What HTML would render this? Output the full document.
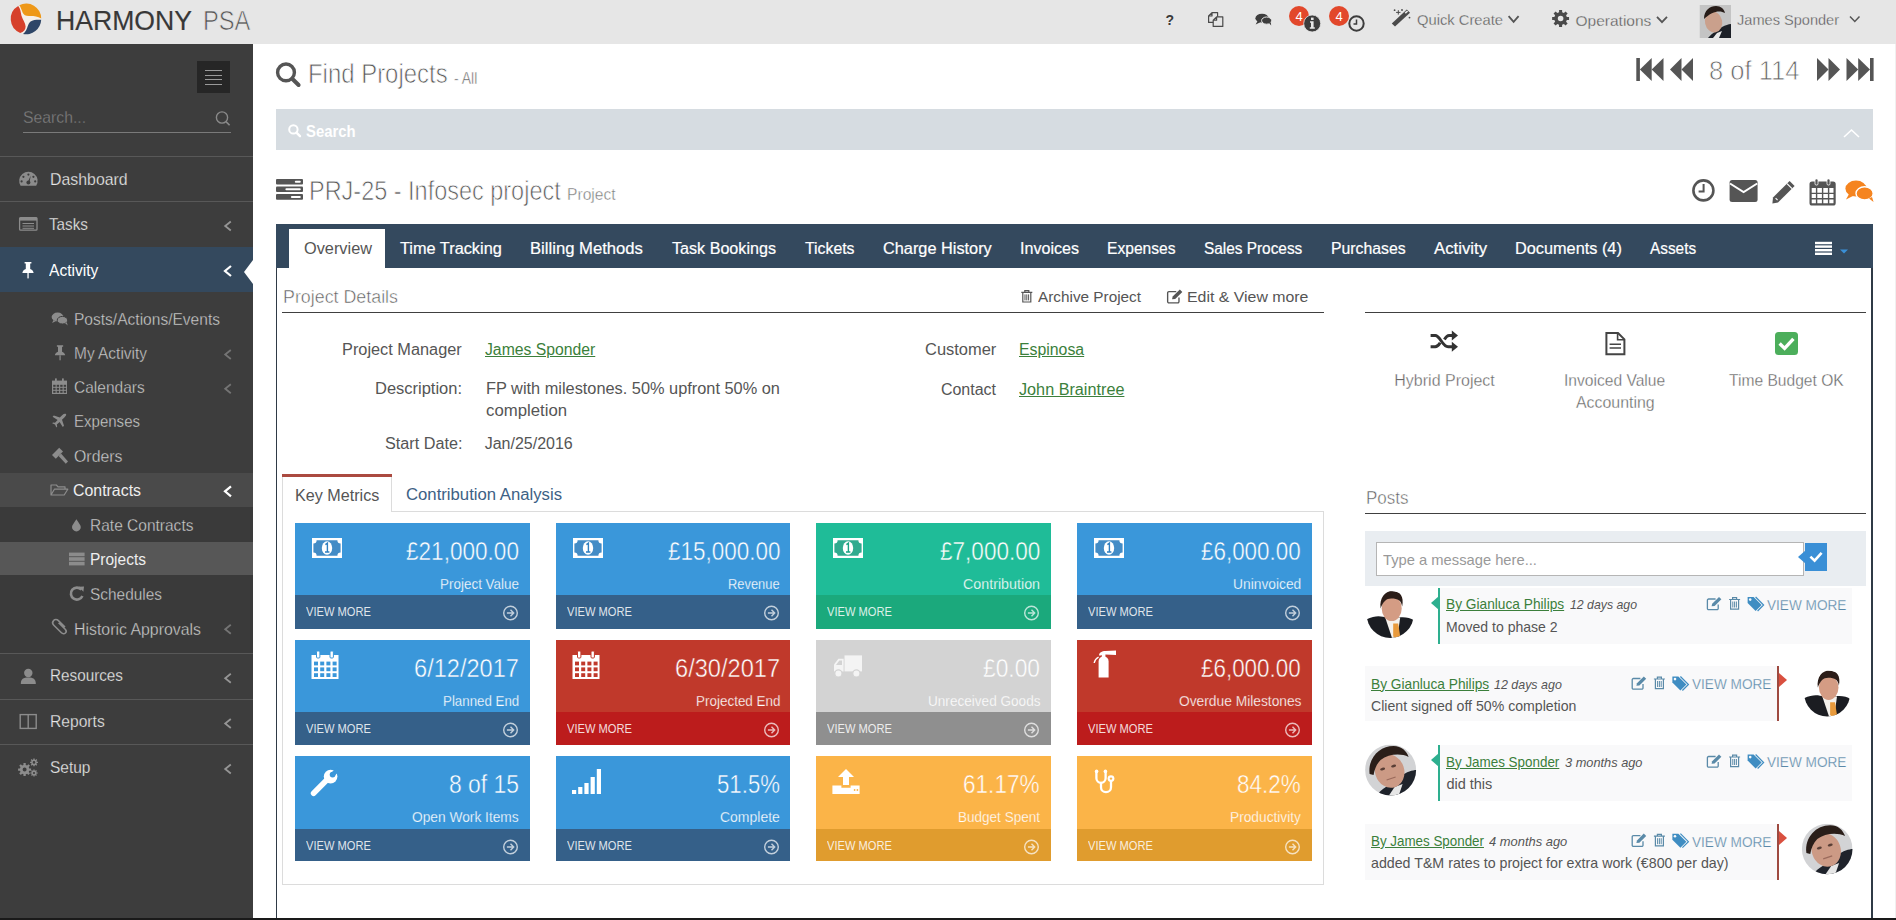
<!DOCTYPE html>
<html><head><meta charset="utf-8"><title>Harmony PSA - PRJ-25</title>
<style>
html,body{margin:0;padding:0;width:1896px;height:920px;overflow:hidden;background:#fff;font-family:'Liberation Sans', sans-serif}
.a{position:absolute}
svg{position:absolute;overflow:visible}
</style></head><body>
<!-- ===== TOPBAR ===== -->
<div class="a" style="left:0;top:0;width:1896px;height:44px;background:#e6e6e6"></div>
<div class="a" style="left:1895px;top:44px;width:1px;height:876px;background:#f0f0f0"></div>

<!-- ===== SIDEBAR ===== -->
<div class="a" style="left:0;top:44px;width:253px;height:876px;background:#3d3d3d"></div>
<!-- hamburger button -->
<div class="a" style="left:197px;top:61px;width:33px;height:32px;background:#262626"></div>
<div class="a" style="left:205px;top:70px;width:17px;height:1px;background:#9a9a9a"></div>
<div class="a" style="left:205px;top:75px;width:17px;height:1px;background:#9a9a9a"></div>
<div class="a" style="left:205px;top:79px;width:17px;height:1px;background:#9a9a9a"></div>
<div class="a" style="left:205px;top:84px;width:17px;height:1px;background:#9a9a9a"></div>
<!-- search underline -->
<div class="a" style="left:23px;top:132px;width:208px;height:1px;background:#7a7a7a"></div>
<!-- dividers -->
<div class="a" style="left:0;top:156px;width:253px;height:1px;background:#585858"></div>
<div class="a" style="left:0;top:201px;width:253px;height:1px;background:#585858"></div>
<div class="a" style="left:0;top:653px;width:253px;height:1px;background:#585858"></div>
<div class="a" style="left:0;top:699px;width:253px;height:1px;background:#585858"></div>
<div class="a" style="left:0;top:744px;width:253px;height:1px;background:#585858"></div>
<!-- active activity -->
<div class="a" style="left:0;top:247px;width:253px;height:45px;background:#34495e"></div>
<svg style="left:244px;top:260px" width="9" height="24"><polygon points="9,0 0,12 9,24" fill="#fff"/></svg>
<!-- contracts rows -->
<div class="a" style="left:0;top:473px;width:253px;height:34px;background:#4a4a4a"></div>
<div class="a" style="left:0;top:507px;width:253px;height:35px;background:#3a3a3a"></div>
<div class="a" style="left:0;top:542px;width:253px;height:33px;background:#575757"></div>
<div class="a" style="left:0;top:575px;width:253px;height:78px;background:#3a3a3a"></div>

<!-- ===== MAIN ===== -->
<!-- search bar -->
<div class="a" style="left:276px;top:109px;width:1597px;height:41px;background:#d6dce1"></div>
<!-- tab bar -->
<div class="a" style="left:276px;top:224px;width:1597px;height:44px;background:#34495e"></div>
<div class="a" style="left:289px;top:229px;width:96px;height:39px;background:#fff"></div>
<!-- panel borders -->
<div class="a" style="left:276px;top:268px;width:1px;height:652px;background:#2f3a46"></div>
<div class="a" style="left:1871px;top:268px;width:2px;height:652px;background:#2f3a46"></div>
<!-- project details divider -->
<div class="a" style="left:282px;top:312px;width:1042px;height:1px;background:#404040"></div>
<div class="a" style="left:1365px;top:312px;width:501px;height:1px;background:#404040"></div>
<!-- key metrics tab -->
<div class="a" style="left:282px;top:474px;width:110px;height:3px;background:#ab4a40"></div>
<div class="a" style="left:282px;top:477px;width:1px;height:34px;background:#dcdcdc"></div>
<div class="a" style="left:391px;top:477px;width:1px;height:34px;background:#dcdcdc"></div>
<!-- metrics panel -->
<div class="a" style="left:282px;top:511px;width:1040px;height:372px;border:1px solid #dcdcdc;border-top-color:#dcdcdc"></div>
<div class="a" style="left:283px;top:511px;width:108px;height:1px;background:#fff"></div>

<!-- posts -->
<div class="a" style="left:1365px;top:513px;width:501px;height:1px;background:#404040"></div>
<div class="a" style="left:1365px;top:531px;width:501px;height:55px;background:#e9edf1"></div>
<div class="a" style="left:1376px;top:542px;width:426px;height:32px;background:#fff;border:1px solid #b5b5b5"></div>
<div class="a" style="left:1805px;top:543px;width:22px;height:28px;background:#3a8fd6"></div>
<svg style="left:1798px;top:550px" width="8" height="14"><polygon points="8,0 0,7 8,14" fill="#3a8fd6"/></svg>

<!-- post boxes -->
<div class="a" style="left:1440px;top:588px;width:412px;height:56px;background:#f9f9fa"></div>
<div class="a" style="left:1438px;top:588px;width:2px;height:56px;background:#2eaf8f"></div>
<svg style="left:1431px;top:596px" width="8" height="14"><polygon points="8,0 0,7 8,14" fill="#2eaf8f"/></svg>

<div class="a" style="left:1365px;top:666px;width:412px;height:55px;background:#f9f9fa"></div>
<div class="a" style="left:1777px;top:666px;width:2px;height:55px;background:#9e4a40"></div>
<svg style="left:1779px;top:673px" width="8" height="14"><polygon points="0,0 8,7 0,14" fill="#d9503f"/></svg>

<div class="a" style="left:1440px;top:745px;width:412px;height:56px;background:#f9f9fa"></div>
<div class="a" style="left:1438px;top:745px;width:2px;height:56px;background:#2eaf8f"></div>
<svg style="left:1431px;top:753px" width="8" height="14"><polygon points="8,0 0,7 8,14" fill="#2eaf8f"/></svg>

<div class="a" style="left:1365px;top:824px;width:412px;height:56px;background:#f9f9fa"></div>
<div class="a" style="left:1777px;top:824px;width:2px;height:56px;background:#9e4a40"></div>
<svg style="left:1779px;top:831px" width="8" height="14"><polygon points="0,0 8,7 0,14" fill="#d9503f"/></svg>

<!-- tiles -->
<div class="a" style="left:295px;top:523px;width:235px;height:72px;background:#3a97da"></div>
<div class="a" style="left:295px;top:595px;width:235px;height:34px;background:#356089"></div>
<div class="a" style="left:556px;top:523px;width:234px;height:72px;background:#3a97da"></div>
<div class="a" style="left:556px;top:595px;width:234px;height:34px;background:#356089"></div>
<div class="a" style="left:816px;top:523px;width:235px;height:72px;background:#1fbc98"></div>
<div class="a" style="left:816px;top:595px;width:235px;height:34px;background:#1ba97c"></div>
<div class="a" style="left:1077px;top:523px;width:235px;height:72px;background:#3a97da"></div>
<div class="a" style="left:1077px;top:595px;width:235px;height:34px;background:#356089"></div>

<div class="a" style="left:295px;top:640px;width:235px;height:72px;background:#3a97da"></div>
<div class="a" style="left:295px;top:712px;width:235px;height:33px;background:#356089"></div>
<div class="a" style="left:556px;top:640px;width:234px;height:72px;background:#c0392b"></div>
<div class="a" style="left:556px;top:712px;width:234px;height:33px;background:#bc1c1c"></div>
<div class="a" style="left:816px;top:640px;width:235px;height:72px;background:#d3d3d3"></div>
<div class="a" style="left:816px;top:712px;width:235px;height:33px;background:#8f8f8f"></div>
<div class="a" style="left:1077px;top:640px;width:235px;height:72px;background:#c0392b"></div>
<div class="a" style="left:1077px;top:712px;width:235px;height:33px;background:#bc1c1c"></div>

<div class="a" style="left:295px;top:756px;width:235px;height:73px;background:#3a97da"></div>
<div class="a" style="left:295px;top:829px;width:235px;height:32px;background:#356089"></div>
<div class="a" style="left:556px;top:756px;width:234px;height:73px;background:#3a97da"></div>
<div class="a" style="left:556px;top:829px;width:234px;height:32px;background:#356089"></div>
<div class="a" style="left:816px;top:756px;width:235px;height:73px;background:#fbb448"></div>
<div class="a" style="left:816px;top:829px;width:235px;height:32px;background:#e09c2e"></div>
<div class="a" style="left:1077px;top:756px;width:235px;height:73px;background:#fbb448"></div>
<div class="a" style="left:1077px;top:829px;width:235px;height:32px;background:#e09c2e"></div>

<!-- bottom line -->
<div class="a" style="left:0;top:918px;width:1896px;height:2px;background:#1a1a1a"></div>

<svg style="left:0;top:0" width="1896" height="920" viewBox="0 0 1896 920"><g transform="translate(11.2,4.2)"><circle cx="15" cy="15" r="15" fill="#f6efe9"/><path d="M8.1,1.0 A15,15 0 0 1 30,14.2 C26,11.8 21,11.6 17.7,11.8 C14.4,11.8 12.4,10.4 11.4,8.2 C10.4,5.8 9.6,2.8 8.1,1.0 Z" fill="#ee9818"/><path d="M7,1.8 A15,15 0 0 0 9,28.7 C12.6,27.8 14.4,25.6 14.4,22.4 C14.4,18.6 11.4,15.2 10.2,11.2 C9.4,7.8 9.2,4.2 7,1.8 Z" fill="#d6402b"/><path d="M30,15.6 A15,15 0 0 1 11.8,29.7 C14.6,27.6 15.8,24.6 16.6,21.8 C17.6,18.4 19.8,16.2 23.2,15.8 C25.8,15.5 28,15.6 30,15.6 Z" fill="#2e4668"/></g>
<text x="1165.5" y="25" font-family="Liberation Sans" font-weight="bold" font-size="14" fill="#3a3a3a">?</text>
<g fill="none" stroke="#4a4a4a" stroke-width="1.2" stroke-linejoin="round"><path d="M1212,12.6 h5.6 v5 M1214,22.4 h-5.4 v-6.4 l3.4,-3.4 v3.4 h-3.4"/><path d="M1216.6,16.8 h6.2 v9.6 h-9.6 v-6.2 z M1213.2,20.2 h3.4 v-3.4" fill="#e6e6e6"/></g>
<g fill="#3d3d3d"><ellipse cx="1262" cy="18.2" rx="6.6" ry="4.4"/><path d="M1257.5,21 l-1.8,3.6 l4.6,-2.4z"/><ellipse cx="1266.6" cy="20.6" rx="5" ry="3.6" stroke="#e6e6e6" stroke-width="1"/><path d="M1269,23 l2.2,2.6 l-0.4,-3.4z"/></g>
<circle cx="1299" cy="16" r="10" fill="#e2482b"/>
<text x="1299" y="21" text-anchor="middle" font-family="Liberation Sans" font-size="13" fill="#fff">4</text>
<circle cx="1339" cy="16" r="10" fill="#e2482b"/>
<text x="1339" y="21" text-anchor="middle" font-family="Liberation Sans" font-size="13" fill="#fff">4</text>
<circle cx="1312.2" cy="23.5" r="8.5" fill="#3d3d3d" stroke="#e6e6e6" stroke-width="0.8"/>
<rect x="1311" y="17.6" width="2.6" height="2.4" fill="#e6e6e6"/><path d="M1310,21.2 h3.6 v6 h1.2 v1.6 h-5 v-1.6 h1.2 v-4.4 h-1z" fill="#e6e6e6"/>
<circle cx="1356.5" cy="23.5" r="7.2" fill="#e6e6e6" stroke="#3d3d3d" stroke-width="2"/>
<polyline points="1356.5,19.5 1356.5,24 1353.5,24" fill="none" stroke="#3d3d3d" stroke-width="1.5"/>
<g><path d="M1391.8,23.5 L1406.8,9.6 L1410,12.8 L1395,26.6Z" fill="#4a4a4a"/><path d="M1404.6,12.6 L1407,10.4 L1408.2,11.6 L1405.8,13.8Z" fill="#e6e6e6"/><path d="M1398.3,10.2 v4.4 M1396.1,12.4 h4.4" stroke="#4a4a4a" stroke-width="1"/><circle cx="1394.6" cy="10.2" r="0.9" fill="#4a4a4a"/><circle cx="1402" cy="10" r="0.9" fill="#4a4a4a"/><circle cx="1409.5" cy="17.6" r="0.9" fill="#4a4a4a"/></g>
<polyline points="1508.6,16.2 1513.6,21.8 1518.6,16.2" fill="none" stroke="#555" stroke-width="1.8"/>
<path d="M1569.07,16.99 L1569.07,20.01 L1566.82,20.02 L1566.07,21.82 L1567.66,23.42 L1565.52,25.56 L1563.92,23.97 L1562.12,24.72 L1562.11,26.97 L1559.09,26.97 L1559.08,24.72 L1557.28,23.97 L1555.68,25.56 L1553.54,23.42 L1555.13,21.82 L1554.38,20.02 L1552.13,20.01 L1552.13,16.99 L1554.38,16.98 L1555.13,15.18 L1553.54,13.58 L1555.68,11.44 L1557.28,13.03 L1559.08,12.28 L1559.09,10.03 L1562.11,10.03 L1562.12,12.28 L1563.92,13.03 L1565.52,11.44 L1567.66,13.58 L1566.07,15.18 L1566.82,16.98Z M1563.40,18.50 A2.8,2.8 0 1 0 1557.80,18.50 A2.8,2.8 0 1 0 1563.40,18.50Z" fill="#4a4a4a" fill-rule="evenodd"/>
<polyline points="1657.0,16.8 1662.0,22.2 1667.0,16.8" fill="none" stroke="#555" stroke-width="1.8"/>
<clipPath id="avtop"><rect x="1699.5" y="5" width="31.5" height="33"/></clipPath>
<g clip-path="url(#avtop)"><rect x="1699.5" y="5" width="31.5" height="33" fill="#c4c4c4"/><path d="M1708,38 C1712,33 1718,30 1722,27 C1726,25 1729,24 1732,24 V38Z" fill="#1c2027"/><path d="M1713,38 L1717,33 L1722,31 L1719,38Z" fill="#e8e8e8"/><ellipse cx="1713.6" cy="22" rx="8.6" ry="10.6" fill="#caa08c" transform="rotate(-12 1713.6 22)"/><path d="M1704,19 C1704,10 1710,6 1716,6 C1721,6 1724,9 1725,13 C1720,10 1712,11 1704,19Z" fill="#271c18"/></g>
<polyline points="1850.0,16.5 1854.8,21.5 1859.5,16.5" fill="none" stroke="#555" stroke-width="1.5"/>
<circle cx="222" cy="117.5" r="5.6" fill="none" stroke="#8a8a8a" stroke-width="1.4"/><line x1="226" y1="121.6" x2="229.6" y2="125.2" stroke="#8a8a8a" stroke-width="1.6"/>
<path d="M20.6,185.8 A9.2,9.2 0 1 1 36.2,185.8 Z" fill="#8c8c8c"/>
<g fill="#3d3d3d"><circle cx="28.4" cy="174.6" r="1.1"/><circle cx="23.4" cy="176.8" r="1.1"/><circle cx="33.4" cy="176.8" r="1.1"/><circle cx="21.6" cy="181.4" r="1.1"/><circle cx="35.2" cy="181.4" r="1.1"/><circle cx="28.4" cy="182.6" r="2"/><path d="M27.6,182.6 L30.8,175.4 L29.4,183Z"/></g>
<rect x="19.6" y="217.6" width="17.4" height="12.6" rx="1" fill="none" stroke="#8c8c8c" stroke-width="1.3"/><rect x="19.6" y="217.6" width="17.4" height="3" fill="#8c8c8c"/><path d="M22.5,223.5 h11.5 M22.5,226 h11.5 M22.5,228.3 h11.5" stroke="#8c8c8c" stroke-width="1"/>
<g transform="translate(22,262) scale(1.0)" fill="#ffffff"><path d="M2.6,0 h6.8 v1.6 h-1.2 v5.4 C10.6,8 11.6,9.6 11.6,11 h-11.2 C0.4,9.6 1.4,8 3.8,7 v-5.4 h-1.2z"/><rect x="5.4" y="11" width="1.3" height="5.4"/></g>
<g fill="#8c8c8c"><ellipse cx="57.6" cy="317" rx="6" ry="4.4"/><path d="M53.5,320 l-1.4,3 l4,-2z"/><ellipse cx="62.4" cy="320.2" rx="5.2" ry="3.8" stroke="#3d3d3d" stroke-width="1"/><path d="M65,323 l2.6,2.4 l-0.8,-3.2z"/></g>
<g transform="translate(54.5,345.2) scale(0.92)" fill="#8c8c8c"><path d="M2.6,0 h6.8 v1.6 h-1.2 v5.4 C10.6,8 11.6,9.6 11.6,11 h-11.2 C0.4,9.6 1.4,8 3.8,7 v-5.4 h-1.2z"/><rect x="5.4" y="11" width="1.3" height="5.4"/></g>
<g fill="#8c8c8c"><rect x="52" y="380.6" width="15" height="13.4"/></g><g fill="#3d3d3d"><rect x="53.2" y="384.8" width="2.4" height="2"/><rect x="53.2" y="387.8" width="2.4" height="2"/><rect x="53.2" y="390.8" width="2.4" height="2"/><rect x="56.7" y="384.8" width="2.4" height="2"/><rect x="56.7" y="387.8" width="2.4" height="2"/><rect x="56.7" y="390.8" width="2.4" height="2"/><rect x="60.2" y="384.8" width="2.4" height="2"/><rect x="60.2" y="387.8" width="2.4" height="2"/><rect x="60.2" y="390.8" width="2.4" height="2"/><rect x="63.7" y="384.8" width="2.4" height="2"/><rect x="63.7" y="387.8" width="2.4" height="2"/><rect x="63.7" y="390.8" width="2.4" height="2"/></g><rect x="55" y="378.4" width="1.8" height="3.6" fill="#8c8c8c"/><rect x="62" y="378.4" width="1.8" height="3.6" fill="#8c8c8c"/>
<path d="M66,414 C65,413.2 63.6,413.8 62.4,415 L59.8,417.6 L53.8,415.6 L52.6,416.8 L57.6,420 L55,422.8 L53,422.4 L52.2,423.2 L55,424.6 L56.4,427.4 L57.2,426.6 L56.8,424.6 L59.6,422 L62.8,427 L64,425.8 L62,419.8 L64.6,417.2 C65.8,416 66.6,414.8 66,414Z" fill="#8c8c8c"/>
<g fill="#8c8c8c"><path d="M52,455 L59.2,447.8 L63,451.6 L55.8,458.8Z"/><path d="M58.6,456 L61,453.6 L68,461.4 L65.8,463.8Z"/></g>
<path d="M51,495 V485 h5.4 l1.6,1.8 h7 v2.6 M51,495 l3.4,-5.8 h13.4 l-3.6,5.8z" fill="none" stroke="#8c8c8c" stroke-width="1.2" stroke-linejoin="round"/>
<path d="M76.4,519.2 C74,523 72,525.2 72,527 A4.4,4.4 0 0 0 80.8,527 C80.8,525.2 78.8,523 76.4,519.2Z" fill="#8c8c8c"/>
<g fill="#8c8c8c"><rect x="69" y="552.6" width="15.6" height="3.6"/><rect x="69" y="557.2" width="15.6" height="3.6"/><rect x="69" y="561.8" width="15.6" height="3.6"/></g>
<path d="M81.4,589.6 A6,6 0 1 0 82.4,596" fill="none" stroke="#8c8c8c" stroke-width="2.6"/><path d="M78.6,586.8 L84,586.4 L83.4,591.8Z" fill="#8c8c8c"/>
<path d="M55,626 L61.6,619.6 C63,618.2 65.2,618.2 66.4,619.6 C67.6,620.8 67.6,622.8 66.2,624.2 L58.6,631.8 C57.4,633 55.6,633 54.6,632 C53.6,631 53.6,629.4 54.8,628.2 L61.4,621.6" fill="none" stroke="#8c8c8c" stroke-width="1.6" transform="translate(120,1) scale(-1,1)"/>
<g fill="#8c8c8c"><circle cx="28.3" cy="673" r="4.2"/><path d="M20.8,684 C20.8,679 23.4,677.6 28.3,677.6 C33.2,677.6 35.8,679 35.8,684Z"/></g>
<rect x="20.2" y="714.6" width="16" height="13.8" fill="none" stroke="#8c8c8c" stroke-width="1.4"/><line x1="28.2" y1="714.6" x2="28.2" y2="728.4" stroke="#8c8c8c" stroke-width="1.4"/>
<path d="M31.10,768.44 L31.10,770.76 L29.26,770.74 L28.70,772.09 L30.01,773.37 L28.37,775.01 L27.09,773.70 L25.74,774.26 L25.76,776.10 L23.44,776.10 L23.46,774.26 L22.11,773.70 L20.83,775.01 L19.19,773.37 L20.50,772.09 L19.94,770.74 L18.10,770.76 L18.10,768.44 L19.94,768.46 L20.50,767.11 L19.19,765.83 L20.83,764.19 L22.11,765.50 L23.46,764.94 L23.44,763.10 L25.76,763.10 L25.74,764.94 L27.09,765.50 L28.37,764.19 L30.01,765.83 L28.70,767.11 L29.26,768.46Z M26.60,769.60 A2,2 0 1 0 22.60,769.60 A2,2 0 1 0 26.60,769.60Z" fill="#8c8c8c" fill-rule="evenodd"/>
<path d="M37.94,761.70 L37.94,763.10 L36.82,763.09 L36.48,763.91 L37.28,764.69 L36.29,765.68 L35.51,764.88 L34.69,765.22 L34.70,766.34 L33.30,766.34 L33.31,765.22 L32.49,764.88 L31.71,765.68 L30.72,764.69 L31.52,763.91 L31.18,763.09 L30.06,763.10 L30.06,761.70 L31.18,761.71 L31.52,760.89 L30.72,760.11 L31.71,759.12 L32.49,759.92 L33.31,759.58 L33.30,758.46 L34.70,758.46 L34.69,759.58 L35.51,759.92 L36.29,759.12 L37.28,760.11 L36.48,760.89 L36.82,761.71Z M35.30,762.40 A1.3,1.3 0 1 0 32.70,762.40 A1.3,1.3 0 1 0 35.30,762.40Z" fill="#8c8c8c" fill-rule="evenodd"/>
<path d="M37.54,772.37 L37.54,773.63 L36.53,773.62 L36.22,774.35 L36.95,775.06 L36.06,775.95 L35.35,775.22 L34.62,775.53 L34.63,776.54 L33.37,776.54 L33.38,775.53 L32.65,775.22 L31.94,775.95 L31.05,775.06 L31.78,774.35 L31.47,773.62 L30.46,773.63 L30.46,772.37 L31.47,772.38 L31.78,771.65 L31.05,770.94 L31.94,770.05 L32.65,770.78 L33.38,770.47 L33.37,769.46 L34.63,769.46 L34.62,770.47 L35.35,770.78 L36.06,770.05 L36.95,770.94 L36.22,771.65 L36.53,772.38Z M35.10,773.00 A1.1,1.1 0 1 0 32.90,773.00 A1.1,1.1 0 1 0 35.10,773.00Z" fill="#8c8c8c" fill-rule="evenodd"/>
<polyline points="230.8,221.5 225.2,226.0 230.8,230.5" fill="none" stroke="#959595" stroke-width="1.8"/>
<polyline points="230.8,673.8 225.2,678.3 230.8,682.8" fill="none" stroke="#959595" stroke-width="1.8"/>
<polyline points="230.8,719.0 225.2,723.5 230.8,728.0" fill="none" stroke="#959595" stroke-width="1.8"/>
<polyline points="230.8,764.5 225.2,769.0 230.8,773.5" fill="none" stroke="#959595" stroke-width="1.8"/>
<polyline points="230.8,350.0 225.2,354.5 230.8,359.0" fill="none" stroke="#747474" stroke-width="1.8"/>
<polyline points="230.8,384.2 225.2,388.7 230.8,393.2" fill="none" stroke="#747474" stroke-width="1.8"/>
<polyline points="230.8,624.8 225.2,629.3 230.8,633.8" fill="none" stroke="#747474" stroke-width="1.8"/>
<polyline points="231.0,266.0 225.0,271.0 231.0,276.0" fill="none" stroke="#ffffff" stroke-width="2.2"/>
<polyline points="231.0,486.3 225.0,491.3 231.0,496.3" fill="none" stroke="#ffffff" stroke-width="2.2"/>
<circle cx="286" cy="72.4" r="8.4" fill="none" stroke="#555" stroke-width="3.4"/><line x1="292.2" y1="78.8" x2="298.6" y2="85" stroke="#555" stroke-width="4" stroke-linecap="round"/>
<g fill="#555"><rect x="1636.3" y="58" width="3.6" height="23"/><path d="M1639.9,69.5 L1651.7,58 V81Z"/><path d="M1651.7,69.5 L1663.5,58 V81Z"/><path d="M1670,69.5 L1681.5,58 V81Z"/><path d="M1681.5,69.5 L1693,58 V81Z"/><path d="M1840,69.5 L1828.5,58 V81Z"/><path d="M1828.5,69.5 L1817,58 V81Z"/><path d="M1870,69.5 L1858.2,58 V81Z"/><path d="M1858.2,69.5 L1846.5,58 V81Z"/><rect x="1870" y="58" width="3.6" height="23"/></g>
<circle cx="293.4" cy="129.4" r="4.2" fill="none" stroke="#fff" stroke-width="2"/><line x1="296.4" y1="132.6" x2="300" y2="136.2" stroke="#fff" stroke-width="2.4" stroke-linecap="round"/>
<polyline points="1844,137 1851.5,130 1859,137" fill="none" stroke="#fff" stroke-width="1.6"/>
<g fill="#555"><rect x="276" y="179" width="27" height="5.4" rx="1"/><rect x="276" y="186.5" width="27" height="5.4" rx="1"/><rect x="276" y="194" width="27" height="5.8" rx="1"/></g><g fill="#fff"><rect x="294.8" y="180.8" width="6" height="2" rx="1"/><rect x="285.4" y="188.3" width="15.4" height="2" rx="1"/><rect x="290.9" y="196" width="9.9" height="2" rx="1"/></g>
<circle cx="1703.4" cy="190.4" r="10" fill="none" stroke="#555" stroke-width="2.6"/><polyline points="1703.6,184 1703.6,191.4 1698.6,191.4" fill="none" stroke="#555" stroke-width="2"/>
<rect x="1729.6" y="180" width="28" height="22" rx="2.5" fill="#555"/><polyline points="1730,183.5 1743.6,192 1757.2,183.5" fill="none" stroke="#fff" stroke-width="2"/>
<path d="M1773,197.4 L1789.6,181 L1794.6,186 L1778,202.4 L1772.4,203.4Z" fill="#555"/><path d="M1787,183.6 L1792,188.6" stroke="#fff" stroke-width="1.2"/><path d="M1775.6,198.2 L1777.6,200.2" stroke="#fff" stroke-width="1.2"/>
<rect x="1810.6" y="182.6" width="24" height="21.8" rx="1.5" fill="none" stroke="#555" stroke-width="2.2"/><rect x="1810.6" y="182.6" width="24" height="5.4" fill="#555"/><path d="M1816.6,188 V204 M1822.6,188 V204 M1828.6,188 V204 M1811,193.4 H1834 M1811,198.8 H1834" stroke="#555" stroke-width="1.4"/><rect x="1815" y="179" width="3" height="6" rx="1.2" fill="#555" stroke="#fff" stroke-width="0.8"/><rect x="1827" y="179" width="3" height="6" rx="1.2" fill="#555" stroke="#fff" stroke-width="0.8"/>
<g fill="#f5841f"><ellipse cx="1856" cy="188.6" rx="10.6" ry="8"/><path d="M1849,194 l-3,5.4 l7.4,-3.6z"/><ellipse cx="1864.6" cy="193.4" rx="8.6" ry="6.6" stroke="#fff" stroke-width="1.4"/><path d="M1869,198.6 l4.6,3.4 l-1.6,-5z"/></g>
<g fill="#fff"><rect x="1815" y="241.8" width="17" height="2.4"/><rect x="1815" y="245.4" width="17" height="2.4"/><rect x="1815" y="249" width="17" height="2.4"/><rect x="1815" y="252.6" width="17" height="2.4"/></g>
<path d="M1840,249.4 h8 l-4,4z" fill="#3a8fd6"/>
<g transform="translate(1020.8,289.4) scale(1.0)" fill="none" stroke="#555" stroke-width="1.2"><path d="M0.5,3 h11 M2,3 v9.6 h8 v-9.6 M4,3 v-1.8 h4 v1.8"/><path d="M4.2,5 v6 M6,5 v6 M7.8,5 v6" stroke-width="1"/></g>
<g transform="translate(1166.8,289) scale(1.05)"><path d="M9,2.5 H2 A1.2,1.2 0 0 0 0.8,3.7 V12 A1.2,1.2 0 0 0 2,13.2 H10.4 A1.2,1.2 0 0 0 11.6,12 V8" fill="none" stroke="#555" stroke-width="1.3"/><path d="M5,9.8 L5.6,7.2 L12.4,0.4 L14.8,2.8 L8,9.6Z" fill="#555"/></g>
<g fill="none" stroke="#333" stroke-width="3"><path d="M1430.6,335.4 h4.6 c5,0 7,11.4 13,11.4 h4"/><path d="M1430.6,346.8 h4.6 c2.4,0 3.8,-2 5,-4"/><path d="M1444.4,339.4 c1.2,-2 2.8,-4 4.6,-4 h3.6"/></g><g fill="#333"><path d="M1451.8,330.4 L1458,335.4 L1451.8,340.4Z"/><path d="M1451.8,341.8 L1458,346.8 L1451.8,351.8Z"/></g>
<path d="M1606.4,333 h11.6 l6.4,6.4 v14.8 h-18z" fill="none" stroke="#444" stroke-width="2"/><path d="M1617.6,333 v6.8 h6.8" fill="none" stroke="#444" stroke-width="1.6"/><path d="M1609.6,344.2 h11.4 M1609.6,348 h11.4" stroke="#444" stroke-width="1.6"/>
<rect x="1775" y="332" width="23" height="23" rx="3.5" fill="#4cae5b"/><polyline points="1779.6,343.6 1784.6,348.4 1793.4,338.8" fill="none" stroke="#fff" stroke-width="3.4"/>
<polyline points="1810.4,556.6 1814.6,560.6 1821.6,552.8" fill="none" stroke="#fff" stroke-width="2.6"/>
<rect x="312" y="538" width="30" height="20" fill="#fff"/><path d="M316.6,540.2 h20.8 a3.2,3.2 0 0 0 3.2,3.2 v9.2 a3.2,3.2 0 0 0 -3.2,3.2 h-20.8 a3.2,3.2 0 0 0 -3.2,-3.2 v-9.2 a3.2,3.2 0 0 0 3.2,-3.2z" fill="#2f7fc0" opacity="0.9"/><ellipse cx="327" cy="548" rx="5.2" ry="6.8" fill="#fff"/><path d="M325.4,544.6 l2,-1.4 v8.8 M325,552 h4.4" fill="none" stroke="#2f7fc0" stroke-width="1.4"/>
<rect x="573" y="538" width="30" height="20" fill="#fff"/><path d="M577.6,540.2 h20.8 a3.2,3.2 0 0 0 3.2,3.2 v9.2 a3.2,3.2 0 0 0 -3.2,3.2 h-20.8 a3.2,3.2 0 0 0 -3.2,-3.2 v-9.2 a3.2,3.2 0 0 0 3.2,-3.2z" fill="#2f7fc0" opacity="0.9"/><ellipse cx="588" cy="548" rx="5.2" ry="6.8" fill="#fff"/><path d="M586.4,544.6 l2,-1.4 v8.8 M586,552 h4.4" fill="none" stroke="#2f7fc0" stroke-width="1.4"/>
<rect x="833" y="538" width="30" height="20" fill="#fff"/><path d="M837.6,540.2 h20.8 a3.2,3.2 0 0 0 3.2,3.2 v9.2 a3.2,3.2 0 0 0 -3.2,3.2 h-20.8 a3.2,3.2 0 0 0 -3.2,-3.2 v-9.2 a3.2,3.2 0 0 0 3.2,-3.2z" fill="#19a283" opacity="0.9"/><ellipse cx="848" cy="548" rx="5.2" ry="6.8" fill="#fff"/><path d="M846.4,544.6 l2,-1.4 v8.8 M846,552 h4.4" fill="none" stroke="#19a283" stroke-width="1.4"/>
<rect x="1094" y="538" width="30" height="20" fill="#fff"/><path d="M1098.6,540.2 h20.8 a3.2,3.2 0 0 0 3.2,3.2 v9.2 a3.2,3.2 0 0 0 -3.2,3.2 h-20.8 a3.2,3.2 0 0 0 -3.2,-3.2 v-9.2 a3.2,3.2 0 0 0 3.2,-3.2z" fill="#2f7fc0" opacity="0.9"/><ellipse cx="1109" cy="548" rx="5.2" ry="6.8" fill="#fff"/><path d="M1107.4,544.6 l2,-1.4 v8.8 M1107,552 h4.4" fill="none" stroke="#2f7fc0" stroke-width="1.4"/>
<rect x="311.5" y="655" width="27" height="24" fill="#fff"/><rect x="314.0" y="661.6" width="4" height="3.8" fill="#3a97da"/><rect x="314.0" y="667.4" width="4" height="3.8" fill="#3a97da"/><rect x="314.0" y="673.2" width="4" height="3.8" fill="#3a97da"/><rect x="320.2" y="661.6" width="4" height="3.8" fill="#3a97da"/><rect x="320.2" y="667.4" width="4" height="3.8" fill="#3a97da"/><rect x="320.2" y="673.2" width="4" height="3.8" fill="#3a97da"/><rect x="326.4" y="661.6" width="4" height="3.8" fill="#3a97da"/><rect x="326.4" y="667.4" width="4" height="3.8" fill="#3a97da"/><rect x="326.4" y="673.2" width="4" height="3.8" fill="#3a97da"/><rect x="332.6" y="661.6" width="4" height="3.8" fill="#3a97da"/><rect x="332.6" y="667.4" width="4" height="3.8" fill="#3a97da"/><rect x="332.6" y="673.2" width="4" height="3.8" fill="#3a97da"/><rect x="316.5" y="651" width="3.4" height="7" rx="1" fill="#fff" stroke="#3a97da" stroke-width="1"/><rect x="330" y="651" width="3.4" height="7" rx="1" fill="#fff" stroke="#3a97da" stroke-width="1"/>
<rect x="572.5" y="655" width="27" height="24" fill="#fff"/><rect x="575.0" y="661.6" width="4" height="3.8" fill="#c0392b"/><rect x="575.0" y="667.4" width="4" height="3.8" fill="#c0392b"/><rect x="575.0" y="673.2" width="4" height="3.8" fill="#c0392b"/><rect x="581.2" y="661.6" width="4" height="3.8" fill="#c0392b"/><rect x="581.2" y="667.4" width="4" height="3.8" fill="#c0392b"/><rect x="581.2" y="673.2" width="4" height="3.8" fill="#c0392b"/><rect x="587.4" y="661.6" width="4" height="3.8" fill="#c0392b"/><rect x="587.4" y="667.4" width="4" height="3.8" fill="#c0392b"/><rect x="587.4" y="673.2" width="4" height="3.8" fill="#c0392b"/><rect x="593.6" y="661.6" width="4" height="3.8" fill="#c0392b"/><rect x="593.6" y="667.4" width="4" height="3.8" fill="#c0392b"/><rect x="593.6" y="673.2" width="4" height="3.8" fill="#c0392b"/><rect x="577.5" y="651" width="3.4" height="7" rx="1" fill="#fff" stroke="#c0392b" stroke-width="1"/><rect x="591" y="651" width="3.4" height="7" rx="1" fill="#fff" stroke="#c0392b" stroke-width="1"/>
<g fill="#f4f4f4"><rect x="844.5" y="655.4" width="17.5" height="16"/><path d="M834,671.4 v-7 l4.4,-5.6 h5.2 v12.6z"/><circle cx="838.4" cy="673.4" r="3.6" stroke="#d3d3d3" stroke-width="1.2"/><circle cx="856.4" cy="673.4" r="3.6" stroke="#d3d3d3" stroke-width="1.2"/></g><path d="M836,665 l3.4,-4.4 h2.6 v4.4z" fill="#d3d3d3"/>
<g fill="#fff"><path d="M1098.6,677.4 v-16 a5,5 0 0 1 10,0 v16z"/><rect x="1101.8" y="653.4" width="3.6" height="4"/><path d="M1099,655.6 c0,-3 3,-4.6 6.4,-4.6 l10.6,-0.4 v4.4 l-10.6,-0.4 c-2,0 -4.4,0.6 -4.4,1z"/><path d="M1098.6,657 c-2.4,1.4 -4,3.4 -4.4,6" fill="none" stroke="#fff" stroke-width="1.4"/></g>
<line x1="313.6" y1="793.2" x2="326" y2="780.8" stroke="#fff" stroke-width="5.6" stroke-linecap="round"/><circle cx="330.6" cy="776.6" r="6.8" fill="#fff"/><circle cx="332.6" cy="774.6" r="2.9" fill="#3a97da"/><path d="M330.6,773.4 L333.8,776.6 L340,770.4 L336.8,767.2Z" fill="#3a97da"/>
<rect x="572.0" y="790.0" width="4.2" height="4" fill="#fff"/><rect x="578.2" y="787.0" width="4.2" height="7" fill="#fff"/><rect x="584.4" y="783.0" width="4.2" height="11" fill="#fff"/><rect x="590.6" y="777.0" width="4.2" height="17" fill="#fff"/><rect x="596.8" y="769.0" width="4.2" height="25" fill="#fff"/>
<g fill="#fff"><path d="M846,769 L854,777 h-5 v8 h-6 v-8 h-5z"/><path d="M832.4,785.4 h9 v2.4 h9.2 v-2.4 h9 v8.6 h-27.2z"/></g><circle cx="854.6" cy="790" r="0.9" fill="#fbb448"/><circle cx="857.4" cy="790" r="0.9" fill="#fbb448"/>
<g fill="none" stroke="#fff" stroke-width="2.3" stroke-linecap="round"><path d="M1096.4,771.6 v6.6 a4.6,4.6 0 0 0 9.2,0 v-6.6"/><path d="M1101,782.8 v4.4 a5,5 0 0 0 10,0 v-5.6"/></g><circle cx="1096.6" cy="771.4" r="1.8" fill="#fff"/><circle cx="1105.4" cy="771.4" r="1.8" fill="#fff"/><circle cx="1111" cy="778.6" r="3.4" fill="#fff"/><circle cx="1111" cy="778.6" r="1.2" fill="#fbb448"/>
<circle cx="510.5" cy="613.0" r="6.8" fill="none" stroke="rgba(255,255,255,0.7)" stroke-width="1.4"/><path d="M506.9,613.0 h6.6 M510.5,609.7 l3.2,3.3 l-3.2,3.3" fill="none" stroke="rgba(255,255,255,0.7)" stroke-width="1.4"/>
<circle cx="771.5" cy="613.0" r="6.8" fill="none" stroke="rgba(255,255,255,0.7)" stroke-width="1.4"/><path d="M767.9,613.0 h6.6 M771.5,609.7 l3.2,3.3 l-3.2,3.3" fill="none" stroke="rgba(255,255,255,0.7)" stroke-width="1.4"/>
<circle cx="1031.5" cy="613.0" r="6.8" fill="none" stroke="rgba(255,255,255,0.7)" stroke-width="1.4"/><path d="M1027.9,613.0 h6.6 M1031.5,609.7 l3.2,3.3 l-3.2,3.3" fill="none" stroke="rgba(255,255,255,0.7)" stroke-width="1.4"/>
<circle cx="1292.5" cy="613.0" r="6.8" fill="none" stroke="rgba(255,255,255,0.7)" stroke-width="1.4"/><path d="M1288.9,613.0 h6.6 M1292.5,609.7 l3.2,3.3 l-3.2,3.3" fill="none" stroke="rgba(255,255,255,0.7)" stroke-width="1.4"/>
<circle cx="510.5" cy="730.0" r="6.8" fill="none" stroke="rgba(255,255,255,0.7)" stroke-width="1.4"/><path d="M506.9,730.0 h6.6 M510.5,726.7 l3.2,3.3 l-3.2,3.3" fill="none" stroke="rgba(255,255,255,0.7)" stroke-width="1.4"/>
<circle cx="771.5" cy="730.0" r="6.8" fill="none" stroke="rgba(255,255,255,0.7)" stroke-width="1.4"/><path d="M767.9,730.0 h6.6 M771.5,726.7 l3.2,3.3 l-3.2,3.3" fill="none" stroke="rgba(255,255,255,0.7)" stroke-width="1.4"/>
<circle cx="1031.5" cy="730.0" r="6.8" fill="none" stroke="rgba(255,255,255,0.7)" stroke-width="1.4"/><path d="M1027.9,730.0 h6.6 M1031.5,726.7 l3.2,3.3 l-3.2,3.3" fill="none" stroke="rgba(255,255,255,0.7)" stroke-width="1.4"/>
<circle cx="1292.5" cy="730.0" r="6.8" fill="none" stroke="rgba(255,255,255,0.7)" stroke-width="1.4"/><path d="M1288.9,730.0 h6.6 M1292.5,726.7 l3.2,3.3 l-3.2,3.3" fill="none" stroke="rgba(255,255,255,0.7)" stroke-width="1.4"/>
<circle cx="510.5" cy="847.0" r="6.8" fill="none" stroke="rgba(255,255,255,0.7)" stroke-width="1.4"/><path d="M506.9,847.0 h6.6 M510.5,843.7 l3.2,3.3 l-3.2,3.3" fill="none" stroke="rgba(255,255,255,0.7)" stroke-width="1.4"/>
<circle cx="771.5" cy="847.0" r="6.8" fill="none" stroke="rgba(255,255,255,0.7)" stroke-width="1.4"/><path d="M767.9,847.0 h6.6 M771.5,843.7 l3.2,3.3 l-3.2,3.3" fill="none" stroke="rgba(255,255,255,0.7)" stroke-width="1.4"/>
<circle cx="1031.5" cy="847.0" r="6.8" fill="none" stroke="rgba(255,255,255,0.7)" stroke-width="1.4"/><path d="M1027.9,847.0 h6.6 M1031.5,843.7 l3.2,3.3 l-3.2,3.3" fill="none" stroke="rgba(255,255,255,0.7)" stroke-width="1.4"/>
<circle cx="1292.5" cy="847.0" r="6.8" fill="none" stroke="rgba(255,255,255,0.7)" stroke-width="1.4"/><path d="M1288.9,847.0 h6.6 M1292.5,843.7 l3.2,3.3 l-3.2,3.3" fill="none" stroke="rgba(255,255,255,0.7)" stroke-width="1.4"/>
<g transform="translate(1706.6,596.5) scale(1.0)"><path d="M9,2.5 H2 A1.2,1.2 0 0 0 0.8,3.7 V12 A1.2,1.2 0 0 0 2,13.2 H10.4 A1.2,1.2 0 0 0 11.6,12 V8" fill="none" stroke="#5a8aa8" stroke-width="1.3"/><path d="M5,9.8 L5.6,7.2 L12.4,0.4 L14.8,2.8 L8,9.6Z" fill="#5a8aa8"/></g>
<g transform="translate(1728.6,596.5) scale(1.0)" fill="none" stroke="#5a8aa8" stroke-width="1.2"><path d="M0.5,3 h11 M2,3 v9.6 h8 v-9.6 M4,3 v-1.8 h4 v1.8"/><path d="M4.2,5 v6 M6,5 v6 M7.8,5 v6" stroke-width="1"/></g>
<path d="M1747.6,597.0 h6 l8,8 l-6,6 l-8,-8z" fill="#3f8dc2"/><circle cx="1750.1999999999998" cy="599.6" r="1.3" fill="#f7f8fa"/><path d="M1755.6,597.0 l8,8 l-6,6" fill="none" stroke="#3f8dc2" stroke-width="1.2"/>
<g transform="translate(1631.4,676) scale(1.0)"><path d="M9,2.5 H2 A1.2,1.2 0 0 0 0.8,3.7 V12 A1.2,1.2 0 0 0 2,13.2 H10.4 A1.2,1.2 0 0 0 11.6,12 V8" fill="none" stroke="#5a8aa8" stroke-width="1.3"/><path d="M5,9.8 L5.6,7.2 L12.4,0.4 L14.8,2.8 L8,9.6Z" fill="#5a8aa8"/></g>
<g transform="translate(1653.4,676) scale(1.0)" fill="none" stroke="#5a8aa8" stroke-width="1.2"><path d="M0.5,3 h11 M2,3 v9.6 h8 v-9.6 M4,3 v-1.8 h4 v1.8"/><path d="M4.2,5 v6 M6,5 v6 M7.8,5 v6" stroke-width="1"/></g>
<path d="M1672.4,676.5 h6 l8,8 l-6,6 l-8,-8z" fill="#3f8dc2"/><circle cx="1675.0" cy="679.1" r="1.3" fill="#f7f8fa"/><path d="M1680.4,676.5 l8,8 l-6,6" fill="none" stroke="#3f8dc2" stroke-width="1.2"/>
<g transform="translate(1706.6,754) scale(1.0)"><path d="M9,2.5 H2 A1.2,1.2 0 0 0 0.8,3.7 V12 A1.2,1.2 0 0 0 2,13.2 H10.4 A1.2,1.2 0 0 0 11.6,12 V8" fill="none" stroke="#5a8aa8" stroke-width="1.3"/><path d="M5,9.8 L5.6,7.2 L12.4,0.4 L14.8,2.8 L8,9.6Z" fill="#5a8aa8"/></g>
<g transform="translate(1728.6,754) scale(1.0)" fill="none" stroke="#5a8aa8" stroke-width="1.2"><path d="M0.5,3 h11 M2,3 v9.6 h8 v-9.6 M4,3 v-1.8 h4 v1.8"/><path d="M4.2,5 v6 M6,5 v6 M7.8,5 v6" stroke-width="1"/></g>
<path d="M1747.6,754.5 h6 l8,8 l-6,6 l-8,-8z" fill="#3f8dc2"/><circle cx="1750.1999999999998" cy="757.1" r="1.3" fill="#f7f8fa"/><path d="M1755.6,754.5 l8,8 l-6,6" fill="none" stroke="#3f8dc2" stroke-width="1.2"/>
<g transform="translate(1631.4,833.2) scale(1.0)"><path d="M9,2.5 H2 A1.2,1.2 0 0 0 0.8,3.7 V12 A1.2,1.2 0 0 0 2,13.2 H10.4 A1.2,1.2 0 0 0 11.6,12 V8" fill="none" stroke="#5a8aa8" stroke-width="1.3"/><path d="M5,9.8 L5.6,7.2 L12.4,0.4 L14.8,2.8 L8,9.6Z" fill="#5a8aa8"/></g>
<g transform="translate(1653.4,833.2) scale(1.0)" fill="none" stroke="#5a8aa8" stroke-width="1.2"><path d="M0.5,3 h11 M2,3 v9.6 h8 v-9.6 M4,3 v-1.8 h4 v1.8"/><path d="M4.2,5 v6 M6,5 v6 M7.8,5 v6" stroke-width="1"/></g>
<path d="M1672.4,833.7 h6 l8,8 l-6,6 l-8,-8z" fill="#3f8dc2"/><circle cx="1675.0" cy="836.3000000000001" r="1.3" fill="#f7f8fa"/><path d="M1680.4,833.7 l8,8 l-6,6" fill="none" stroke="#3f8dc2" stroke-width="1.2"/>
<clipPath id="av1"><circle cx="1390.2" cy="614.5" r="23.5"/></clipPath>
<g clip-path="url(#av1)"><path d="M1366.2,619.5 C1376.2,614.5 1382.2,616.5 1386.2,617.5 L1398.2,617.5 C1404.2,616.5 1410.2,617.5 1414.2,620.5 L1414.2,638.5 L1366.2,638.5Z" fill="#1b1d22"/><path d="M1385.2,617.5 L1400.2,617.5 L1397.2,638.5 L1392.2,638.5Z" fill="#f4f1ec"/><path d="M1393.2,623.5 L1398.2,623.5 L1400.2,636.5 L1396.2,638.5 L1393.2,636.5Z" fill="#e89a3c"/><ellipse cx="1391.7" cy="608.5" rx="10.0" ry="12.6" fill="#d49c84"/><path d="M1380.6,608.5 C1379.2,597.5 1385.2,591.0 1392.2,591.0 C1400.2,591.0 1404.2,596.5 1402.2,606.5 C1401.2,600.5 1398.2,598.5 1391.2,598.5 C1386.2,598.5 1383.2,601.5 1380.6,608.5Z" fill="#2b1d18"/></g>
<clipPath id="av2"><circle cx="1827.2" cy="693.5" r="23"/></clipPath>
<g clip-path="url(#av2)"><path d="M1803.7,698.4 C1813.5,693.5 1819.4,695.5 1823.3,696.4 L1835.0,696.4 C1840.9,695.5 1846.8,696.4 1850.7,699.4 L1850.7,717.0 L1803.7,717.0Z" fill="#1b1d22"/><path d="M1822.3,696.4 L1837.0,696.4 L1834.1,717.0 L1829.2,717.0Z" fill="#f4f1ec"/><path d="M1830.1,702.3 L1835.0,702.3 L1837.0,715.0 L1833.1,717.0 L1830.1,715.0Z" fill="#e89a3c"/><ellipse cx="1828.7" cy="687.6" rx="9.8" ry="12.3" fill="#d49c84"/><path d="M1817.8,687.6 C1816.4,676.9 1822.3,670.5 1829.2,670.5 C1837.0,670.5 1840.9,675.9 1838.9,685.7 C1838.0,679.8 1835.0,677.8 1828.2,677.8 C1823.3,677.8 1820.3,680.8 1817.8,687.6Z" fill="#2b1d18"/></g>
<clipPath id="av3"><circle cx="1390.6" cy="770" r="25.5"/></clipPath>
<g clip-path="url(#av3)"><rect x="1365.1" y="744.5" width="51.0" height="51.0" fill="#d2d3d5"/><path d="M1376.6,796.0 C1380.6,788.0 1390.6,786.0 1400.6,776.0 C1406.6,772.0 1412.6,770.0 1416.6,770.0 L1416.6,796.0Z" fill="#1f232b"/><path d="M1388.6,796.0 L1394.6,787.0 L1402.6,784.0 L1398.6,796.0Z" fill="#e6e6e6"/><ellipse cx="1389.6" cy="771.0" rx="14.6" ry="17.0" fill="#cc9a85" transform="rotate(-18 1389.6 771.0)"/><path d="M1369.6,774.0 C1367.6,758.0 1379.6,746.0 1393.6,746.0 C1401.6,746.0 1406.6,751.0 1408.6,757.0 C1400.6,753.0 1388.6,754.0 1380.6,760.0 C1376.6,764.0 1374.6,769.0 1373.6,775.0Z" fill="#2a1e19"/><ellipse cx="1382.6" cy="769.0" rx="2.6" ry="1.3" fill="#5a3f36" transform="rotate(-18 1382.6 769.0)"/><ellipse cx="1393.6" cy="766.0" rx="2.6" ry="1.3" fill="#5a3f36" transform="rotate(-18 1393.6 766.0)"/><path d="M1386.6,780.0 C1389.6,779.0 1392.6,778.0 1395.6,777.0" stroke="#9a6a5c" stroke-width="1.2" fill="none"/></g>
<clipPath id="av4"><circle cx="1827.2" cy="849" r="25.3"/></clipPath>
<g clip-path="url(#av4)"><rect x="1801.9" y="823.7" width="50.6" height="50.6" fill="#d2d3d5"/><path d="M1813.3,874.8 C1817.3,866.9 1827.2,864.9 1837.1,855.0 C1843.1,851.0 1849.0,849.0 1853.0,849.0 L1853.0,874.8Z" fill="#1f232b"/><path d="M1825.2,874.8 L1831.2,865.9 L1839.1,862.9 L1835.1,874.8Z" fill="#e6e6e6"/><ellipse cx="1826.2" cy="850.0" rx="14.5" ry="16.9" fill="#cc9a85" transform="rotate(-18 1826.2 850.0)"/><path d="M1806.4,853.0 C1804.4,837.1 1816.3,825.2 1830.2,825.2 C1838.1,825.2 1843.1,830.1 1845.1,836.1 C1837.1,832.1 1825.2,833.1 1817.3,839.1 C1813.3,843.0 1811.3,848.0 1810.3,854.0Z" fill="#2a1e19"/><ellipse cx="1819.3" cy="848.0" rx="2.6" ry="1.3" fill="#5a3f36" transform="rotate(-18 1819.3 848.0)"/><ellipse cx="1830.2" cy="845.0" rx="2.6" ry="1.3" fill="#5a3f36" transform="rotate(-18 1830.2 845.0)"/><path d="M1823.2,858.9 C1826.2,857.9 1829.2,856.9 1832.2,855.9" stroke="#9a6a5c" stroke-width="1.2" fill="none"/></g></svg>
<div style="position:absolute;white-space:nowrap;line-height:1;font-size:27px;color:#383838;-webkit-text-stroke:0.15px #383838;left:56.1px;top:8.1px;transform:scaleX(0.985);transform-origin:0 0;">HARMONY</div>
<div style="position:absolute;white-space:nowrap;line-height:1;font-size:27px;color:#555;-webkit-text-stroke:0.7px #e6e6e6;left:202.8px;top:8.1px;transform:scaleX(0.877);transform-origin:0 0;">PSA</div>
<div style="position:absolute;white-space:nowrap;line-height:1;font-size:15.5px;color:#555;-webkit-text-stroke:0.3px #e6e6e6;left:1417.0px;top:12.3px;transform:scaleX(0.951);transform-origin:0 0;">Quick Create</div>
<div style="position:absolute;white-space:nowrap;line-height:1;font-size:15.5px;color:#555;-webkit-text-stroke:0.3px #e6e6e6;left:1575.5px;top:12.7px;">Operations</div>
<div style="position:absolute;white-space:nowrap;line-height:1;font-size:15.5px;color:#555;-webkit-text-stroke:0.3px #e6e6e6;left:1737.0px;top:12.3px;transform:scaleX(0.940);transform-origin:0 0;">James Sponder</div>
<div style="position:absolute;white-space:nowrap;line-height:1;font-size:16px;color:#808080;-webkit-text-stroke:0.3px #3d3d3d;left:23.0px;top:110.4px;transform:scaleX(0.984);transform-origin:0 0;">Search...</div>
<div style="position:absolute;white-space:nowrap;line-height:1;font-size:17px;color:#e8e8e8;-webkit-text-stroke:0.25px #3d3d3d;left:49.6px;top:170.6px;transform:scaleX(0.934);transform-origin:0 0;">Dashboard</div>
<div style="position:absolute;white-space:nowrap;line-height:1;font-size:17px;color:#e8e8e8;-webkit-text-stroke:0.25px #3d3d3d;left:49.0px;top:215.6px;transform:scaleX(0.897);transform-origin:0 0;">Tasks</div>
<div style="position:absolute;white-space:nowrap;line-height:1;font-size:17px;color:#ffffff;;left:49.0px;top:261.6px;transform:scaleX(0.916);transform-origin:0 0;">Activity</div>
<div style="position:absolute;white-space:nowrap;line-height:1;font-size:16.5px;color:#d0d0d0;-webkit-text-stroke:0.35px #3d3d3d;left:74.0px;top:311.0px;transform:scaleX(0.942);transform-origin:0 0;">Posts/Actions/Events</div>
<div style="position:absolute;white-space:nowrap;line-height:1;font-size:16.5px;color:#d0d0d0;-webkit-text-stroke:0.35px #3d3d3d;left:74.0px;top:345.0px;transform:scaleX(0.937);transform-origin:0 0;">My Activity</div>
<div style="position:absolute;white-space:nowrap;line-height:1;font-size:16.5px;color:#d0d0d0;-webkit-text-stroke:0.35px #3d3d3d;left:73.5px;top:379.0px;transform:scaleX(0.940);transform-origin:0 0;">Calendars</div>
<div style="position:absolute;white-space:nowrap;line-height:1;font-size:16.5px;color:#d0d0d0;-webkit-text-stroke:0.35px #3d3d3d;left:74.0px;top:413.0px;transform:scaleX(0.911);transform-origin:0 0;">Expenses</div>
<div style="position:absolute;white-space:nowrap;line-height:1;font-size:16.5px;color:#d0d0d0;-webkit-text-stroke:0.35px #3d3d3d;left:73.5px;top:448.0px;transform:scaleX(0.962);transform-origin:0 0;">Orders</div>
<div style="position:absolute;white-space:nowrap;line-height:1;font-size:16.5px;color:#eeeeee;;left:73.0px;top:481.7px;transform:scaleX(0.963);transform-origin:0 0;">Contracts</div>
<div style="position:absolute;white-space:nowrap;line-height:1;font-size:16.5px;color:#d0d0d0;-webkit-text-stroke:0.35px #3d3d3d;left:90.0px;top:517.0px;transform:scaleX(0.940);transform-origin:0 0;">Rate Contracts</div>
<div style="position:absolute;white-space:nowrap;line-height:1;font-size:16.5px;color:#eeeeee;;left:90.0px;top:550.6px;transform:scaleX(0.939);transform-origin:0 0;">Projects</div>
<div style="position:absolute;white-space:nowrap;line-height:1;font-size:16.5px;color:#d0d0d0;-webkit-text-stroke:0.35px #3d3d3d;left:90.0px;top:585.5px;transform:scaleX(0.934);transform-origin:0 0;">Schedules</div>
<div style="position:absolute;white-space:nowrap;line-height:1;font-size:16.5px;color:#d0d0d0;-webkit-text-stroke:0.35px #3d3d3d;left:74.2px;top:620.5px;transform:scaleX(0.962);transform-origin:0 0;">Historic Approvals</div>
<div style="position:absolute;white-space:nowrap;line-height:1;font-size:17px;color:#e8e8e8;-webkit-text-stroke:0.25px #3d3d3d;left:49.6px;top:667.2px;transform:scaleX(0.898);transform-origin:0 0;">Resources</div>
<div style="position:absolute;white-space:nowrap;line-height:1;font-size:17px;color:#e8e8e8;-webkit-text-stroke:0.25px #3d3d3d;left:49.6px;top:713.3px;transform:scaleX(0.919);transform-origin:0 0;">Reports</div>
<div style="position:absolute;white-space:nowrap;line-height:1;font-size:17px;color:#e8e8e8;-webkit-text-stroke:0.25px #3d3d3d;left:49.6px;top:758.5px;transform:scaleX(0.911);transform-origin:0 0;">Setup</div>
<div style="position:absolute;white-space:nowrap;line-height:1;font-size:27px;color:#5a5a5a;-webkit-text-stroke:0.75px #fff;left:307.6px;top:61.2px;transform:scaleX(0.886);transform-origin:0 0;">Find Projects</div>
<div style="position:absolute;white-space:nowrap;line-height:1;font-size:17px;color:#5a5a5a;-webkit-text-stroke:0.5px #fff;left:453.7px;top:69.8px;transform:scaleX(0.822);transform-origin:0 0;">- All</div>
<div style="position:absolute;white-space:nowrap;line-height:1;font-size:28px;color:#666;-webkit-text-stroke:0.8px #fff;left:1709.4px;top:56.9px;transform:scaleX(0.913);transform-origin:0 0;">8 of 114</div>
<div style="position:absolute;white-space:nowrap;line-height:1;font-size:16px;color:#ffffff;font-weight:bold;left:306.3px;top:123.7px;transform:scaleX(0.929);transform-origin:0 0;">Search</div>
<div style="position:absolute;white-space:nowrap;line-height:1;font-size:27px;color:#5a5a5a;-webkit-text-stroke:0.75px #fff;left:309.0px;top:178.1px;transform:scaleX(0.869);transform-origin:0 0;">PRJ-25 - Infosec project</div>
<div style="position:absolute;white-space:nowrap;line-height:1;font-size:16px;color:#777;-webkit-text-stroke:0.4px #fff;left:566.7px;top:187.4px;transform:scaleX(0.978);transform-origin:0 0;">Project</div>
<div style="position:absolute;white-space:nowrap;line-height:1;font-size:16px;color:#555;;left:303.5px;top:240.9px;transform:scaleX(1.020);transform-origin:0 0;">Overview</div>
<div style="position:absolute;white-space:nowrap;line-height:1;font-size:16px;color:#fff;-webkit-text-stroke:0.2px #fff;left:399.7px;top:240.9px;transform:scaleX(1.019);transform-origin:0 0;">Time Tracking</div>
<div style="position:absolute;white-space:nowrap;line-height:1;font-size:16px;color:#fff;-webkit-text-stroke:0.2px #fff;left:530.0px;top:240.9px;transform:scaleX(1.041);transform-origin:0 0;">Billing Methods</div>
<div style="position:absolute;white-space:nowrap;line-height:1;font-size:16px;color:#fff;-webkit-text-stroke:0.2px #fff;left:671.5px;top:240.9px;transform:scaleX(1.008);transform-origin:0 0;">Task Bookings</div>
<div style="position:absolute;white-space:nowrap;line-height:1;font-size:16px;color:#fff;-webkit-text-stroke:0.2px #fff;left:804.5px;top:240.9px;transform:scaleX(0.988);transform-origin:0 0;">Tickets</div>
<div style="position:absolute;white-space:nowrap;line-height:1;font-size:16px;color:#fff;-webkit-text-stroke:0.2px #fff;left:882.6px;top:240.9px;transform:scaleX(1.019);transform-origin:0 0;">Charge History</div>
<div style="position:absolute;white-space:nowrap;line-height:1;font-size:16px;color:#fff;-webkit-text-stroke:0.2px #fff;left:1019.7px;top:240.9px;transform:scaleX(1.005);transform-origin:0 0;">Invoices</div>
<div style="position:absolute;white-space:nowrap;line-height:1;font-size:16px;color:#fff;-webkit-text-stroke:0.2px #fff;left:1107.3px;top:240.9px;transform:scaleX(0.975);transform-origin:0 0;">Expenses</div>
<div style="position:absolute;white-space:nowrap;line-height:1;font-size:16px;color:#fff;-webkit-text-stroke:0.2px #fff;left:1204.2px;top:240.9px;transform:scaleX(0.961);transform-origin:0 0;">Sales Process</div>
<div style="position:absolute;white-space:nowrap;line-height:1;font-size:16px;color:#fff;-webkit-text-stroke:0.2px #fff;left:1330.8px;top:240.9px;transform:scaleX(0.988);transform-origin:0 0;">Purchases</div>
<div style="position:absolute;white-space:nowrap;line-height:1;font-size:16px;color:#fff;-webkit-text-stroke:0.2px #fff;left:1433.8px;top:240.9px;transform:scaleX(1.046);transform-origin:0 0;">Activity</div>
<div style="position:absolute;white-space:nowrap;line-height:1;font-size:16px;color:#fff;-webkit-text-stroke:0.2px #fff;left:1515.1px;top:240.9px;transform:scaleX(1.018);transform-origin:0 0;">Documents (4)</div>
<div style="position:absolute;white-space:nowrap;line-height:1;font-size:16px;color:#fff;-webkit-text-stroke:0.2px #fff;left:1650.0px;top:240.9px;transform:scaleX(0.960);transform-origin:0 0;">Assets</div>
<div style="position:absolute;white-space:nowrap;line-height:1;font-size:18px;color:#5a5a5a;-webkit-text-stroke:0.5px #fff;left:282.8px;top:287.7px;transform:scaleX(0.991);transform-origin:0 0;">Project Details</div>
<div style="position:absolute;white-space:nowrap;line-height:1;font-size:15.5px;color:#555;;left:1038.0px;top:288.8px;transform:scaleX(0.988);transform-origin:0 0;">Archive Project</div>
<div style="position:absolute;white-space:nowrap;line-height:1;font-size:15.5px;color:#555;;left:1187.3px;top:288.8px;transform:scaleX(1.024);transform-origin:0 0;">Edit &amp; View more</div>
<div style="position:absolute;white-space:nowrap;line-height:1;font-size:16px;color:#555;;left:342.3px;top:342.1px;transform:scaleX(1.020);transform-origin:0 0;">Project Manager</div>
<div style="position:absolute;white-space:nowrap;line-height:1;font-size:16px;color:#3b7f3b;text-decoration:underline;left:484.7px;top:342.1px;transform:scaleX(0.984);transform-origin:0 0;">James Sponder</div>
<div style="position:absolute;white-space:nowrap;line-height:1;font-size:16px;color:#555;;left:375.0px;top:381.3px;transform:scaleX(1.030);transform-origin:0 0;">Description:</div>
<div style="position:absolute;white-space:nowrap;line-height:1;font-size:16px;color:#555;;left:485.6px;top:381.3px;transform:scaleX(1.021);transform-origin:0 0;">FP with milestones. 50% upfront 50% on</div>
<div style="position:absolute;white-space:nowrap;line-height:1;font-size:16px;color:#555;;left:485.6px;top:403.0px;transform:scaleX(1.047);transform-origin:0 0;">completion</div>
<div style="position:absolute;white-space:nowrap;line-height:1;font-size:16px;color:#555;;left:384.6px;top:436.4px;transform:scaleX(1.012);transform-origin:0 0;">Start Date:</div>
<div style="position:absolute;white-space:nowrap;line-height:1;font-size:16px;color:#555;;left:484.7px;top:436.4px;">Jan/25/2016</div>
<div style="position:absolute;white-space:nowrap;line-height:1;font-size:16px;color:#555;;left:925.0px;top:342.4px;transform:scaleX(1.028);transform-origin:0 0;">Customer</div>
<div style="position:absolute;white-space:nowrap;line-height:1;font-size:16px;color:#3b7f3b;text-decoration:underline;left:1019.4px;top:342.4px;transform:scaleX(0.990);transform-origin:0 0;">Espinosa</div>
<div style="position:absolute;white-space:nowrap;line-height:1;font-size:16px;color:#555;;left:940.9px;top:381.6px;">Contact</div>
<div style="position:absolute;white-space:nowrap;line-height:1;font-size:16px;color:#3b7f3b;text-decoration:underline;left:1019.4px;top:381.6px;transform:scaleX(1.013);transform-origin:0 0;">John Braintree</div>
<div style="position:absolute;white-space:nowrap;line-height:1;font-size:16px;color:#666;-webkit-text-stroke:0.3px #fff;left:1394.3px;top:373.2px;">Hybrid Project</div>
<div style="position:absolute;white-space:nowrap;line-height:1;font-size:16px;color:#666;-webkit-text-stroke:0.3px #fff;left:1564.3px;top:373.2px;transform:scaleX(0.975);transform-origin:0 0;">Invoiced Value</div>
<div style="position:absolute;white-space:nowrap;line-height:1;font-size:16px;color:#666;-webkit-text-stroke:0.3px #fff;left:1576.0px;top:395.2px;transform:scaleX(0.994);transform-origin:0 0;">Accounting</div>
<div style="position:absolute;white-space:nowrap;line-height:1;font-size:16px;color:#666;-webkit-text-stroke:0.3px #fff;left:1729.1px;top:373.2px;transform:scaleX(0.975);transform-origin:0 0;">Time Budget OK</div>
<div style="position:absolute;white-space:nowrap;line-height:1;font-size:18px;color:#5a5a5a;-webkit-text-stroke:0.5px #fff;left:1365.5px;top:488.9px;transform:scaleX(0.946);transform-origin:0 0;">Posts</div>
<div style="position:absolute;white-space:nowrap;line-height:1;font-size:15px;color:#999;;left:1382.6px;top:552.2px;transform:scaleX(0.982);transform-origin:0 0;">Type a message here...</div>
<div style="position:absolute;white-space:nowrap;line-height:1;font-size:16px;color:#555;;left:295.0px;top:487.8px;transform:scaleX(1.009);transform-origin:0 0;">Key Metrics</div>
<div style="position:absolute;white-space:nowrap;line-height:1;font-size:16px;color:#3d6185;;left:406.4px;top:487.0px;transform:scaleX(1.044);transform-origin:0 0;">Contribution Analysis</div>
<div style="position:absolute;white-space:nowrap;line-height:1;font-size:25px;color:#fff;-webkit-text-stroke:0.45px #3a97da;left:406.0px;top:539.2px;transform:scaleX(0.903);transform-origin:0 0;">£21,000.00</div>
<div style="position:absolute;white-space:nowrap;line-height:1;font-size:14.5px;color:#fff;-webkit-text-stroke:0.25px #3a97da;left:440.0px;top:577.2px;transform:scaleX(0.928);transform-origin:0 0;">Project Value</div>
<div style="position:absolute;white-space:nowrap;line-height:1;font-size:13px;color:rgba(255,255,255,0.85);;left:306.0px;top:605.0px;transform:scaleX(0.857);transform-origin:0 0;">VIEW MORE</div>
<div style="position:absolute;white-space:nowrap;line-height:1;font-size:25px;color:#fff;-webkit-text-stroke:0.45px #3a97da;left:667.5px;top:539.2px;transform:scaleX(0.899);transform-origin:0 0;">£15,000.00</div>
<div style="position:absolute;white-space:nowrap;line-height:1;font-size:14.5px;color:#fff;-webkit-text-stroke:0.25px #3a97da;left:728.4px;top:577.2px;transform:scaleX(0.889);transform-origin:0 0;">Revenue</div>
<div style="position:absolute;white-space:nowrap;line-height:1;font-size:13px;color:rgba(255,255,255,0.85);;left:567.0px;top:605.0px;transform:scaleX(0.857);transform-origin:0 0;">VIEW MORE</div>
<div style="position:absolute;white-space:nowrap;line-height:1;font-size:25px;color:#fff;-webkit-text-stroke:0.45px #1fbc98;left:939.7px;top:539.2px;transform:scaleX(0.902);transform-origin:0 0;">£7,000.00</div>
<div style="position:absolute;white-space:nowrap;line-height:1;font-size:14.5px;color:#fff;-webkit-text-stroke:0.25px #1fbc98;left:963.0px;top:577.2px;transform:scaleX(0.985);transform-origin:0 0;">Contribution</div>
<div style="position:absolute;white-space:nowrap;line-height:1;font-size:13px;color:rgba(255,255,255,0.85);;left:827.0px;top:605.0px;transform:scaleX(0.857);transform-origin:0 0;">VIEW MORE</div>
<div style="position:absolute;white-space:nowrap;line-height:1;font-size:25px;color:#fff;-webkit-text-stroke:0.45px #3a97da;left:1201.3px;top:539.2px;transform:scaleX(0.896);transform-origin:0 0;">£6,000.00</div>
<div style="position:absolute;white-space:nowrap;line-height:1;font-size:14.5px;color:#fff;-webkit-text-stroke:0.25px #3a97da;left:1232.7px;top:577.2px;transform:scaleX(0.952);transform-origin:0 0;">Uninvoiced</div>
<div style="position:absolute;white-space:nowrap;line-height:1;font-size:13px;color:rgba(255,255,255,0.85);;left:1088.0px;top:605.0px;transform:scaleX(0.857);transform-origin:0 0;">VIEW MORE</div>
<div style="position:absolute;white-space:nowrap;line-height:1;font-size:25px;color:#fff;-webkit-text-stroke:0.45px #3a97da;left:414.0px;top:656.2px;transform:scaleX(0.944);transform-origin:0 0;">6/12/2017</div>
<div style="position:absolute;white-space:nowrap;line-height:1;font-size:14.5px;color:#fff;-webkit-text-stroke:0.25px #3a97da;left:442.8px;top:694.2px;transform:scaleX(0.918);transform-origin:0 0;">Planned End</div>
<div style="position:absolute;white-space:nowrap;line-height:1;font-size:13px;color:rgba(255,255,255,0.85);;left:306.0px;top:721.8px;transform:scaleX(0.857);transform-origin:0 0;">VIEW MORE</div>
<div style="position:absolute;white-space:nowrap;line-height:1;font-size:25px;color:#fff;-webkit-text-stroke:0.45px #c0392b;left:674.9px;top:656.2px;transform:scaleX(0.945);transform-origin:0 0;">6/30/2017</div>
<div style="position:absolute;white-space:nowrap;line-height:1;font-size:14.5px;color:#fff;-webkit-text-stroke:0.25px #c0392b;left:695.5px;top:694.2px;transform:scaleX(0.928);transform-origin:0 0;">Projected End</div>
<div style="position:absolute;white-space:nowrap;line-height:1;font-size:13px;color:rgba(255,255,255,0.85);;left:567.0px;top:721.8px;transform:scaleX(0.857);transform-origin:0 0;">VIEW MORE</div>
<div style="position:absolute;white-space:nowrap;line-height:1;font-size:25px;color:#fff;-webkit-text-stroke:0.45px #d3d3d3;left:983.0px;top:656.2px;transform:scaleX(0.911);transform-origin:0 0;">£0.00</div>
<div style="position:absolute;white-space:nowrap;line-height:1;font-size:14.5px;color:#fff;-webkit-text-stroke:0.25px #d3d3d3;left:927.5px;top:694.2px;transform:scaleX(0.937);transform-origin:0 0;">Unreceived Goods</div>
<div style="position:absolute;white-space:nowrap;line-height:1;font-size:13px;color:rgba(255,255,255,0.85);;left:827.0px;top:721.8px;transform:scaleX(0.857);transform-origin:0 0;">VIEW MORE</div>
<div style="position:absolute;white-space:nowrap;line-height:1;font-size:25px;color:#fff;-webkit-text-stroke:0.45px #c0392b;left:1201.3px;top:656.2px;transform:scaleX(0.896);transform-origin:0 0;">£6,000.00</div>
<div style="position:absolute;white-space:nowrap;line-height:1;font-size:14.5px;color:#fff;-webkit-text-stroke:0.25px #c0392b;left:1178.5px;top:694.2px;transform:scaleX(0.950);transform-origin:0 0;">Overdue Milestones</div>
<div style="position:absolute;white-space:nowrap;line-height:1;font-size:13px;color:rgba(255,255,255,0.85);;left:1088.0px;top:721.8px;transform:scaleX(0.857);transform-origin:0 0;">VIEW MORE</div>
<div style="position:absolute;white-space:nowrap;line-height:1;font-size:25px;color:#fff;-webkit-text-stroke:0.45px #3a97da;left:449.0px;top:772.2px;transform:scaleX(0.916);transform-origin:0 0;">8 of 15</div>
<div style="position:absolute;white-space:nowrap;line-height:1;font-size:14.5px;color:#fff;-webkit-text-stroke:0.25px #3a97da;left:412.3px;top:810.2px;transform:scaleX(0.948);transform-origin:0 0;">Open Work Items</div>
<div style="position:absolute;white-space:nowrap;line-height:1;font-size:13px;color:rgba(255,255,255,0.85);;left:306.0px;top:838.6px;transform:scaleX(0.857);transform-origin:0 0;">VIEW MORE</div>
<div style="position:absolute;white-space:nowrap;line-height:1;font-size:25px;color:#fff;-webkit-text-stroke:0.45px #3a97da;left:717.0px;top:772.2px;transform:scaleX(0.889);transform-origin:0 0;">51.5%</div>
<div style="position:absolute;white-space:nowrap;line-height:1;font-size:14.5px;color:#fff;-webkit-text-stroke:0.25px #3a97da;left:720.2px;top:810.2px;transform:scaleX(0.964);transform-origin:0 0;">Complete</div>
<div style="position:absolute;white-space:nowrap;line-height:1;font-size:13px;color:rgba(255,255,255,0.85);;left:567.0px;top:838.6px;transform:scaleX(0.857);transform-origin:0 0;">VIEW MORE</div>
<div style="position:absolute;white-space:nowrap;line-height:1;font-size:25px;color:#fff;-webkit-text-stroke:0.45px #fbb448;left:963.4px;top:772.2px;transform:scaleX(0.903);transform-origin:0 0;">61.17%</div>
<div style="position:absolute;white-space:nowrap;line-height:1;font-size:14.5px;color:#fff;-webkit-text-stroke:0.25px #fbb448;left:958.0px;top:810.2px;transform:scaleX(0.933);transform-origin:0 0;">Budget Spent</div>
<div style="position:absolute;white-space:nowrap;line-height:1;font-size:13px;color:rgba(255,255,255,0.85);;left:827.0px;top:838.6px;transform:scaleX(0.857);transform-origin:0 0;">VIEW MORE</div>
<div style="position:absolute;white-space:nowrap;line-height:1;font-size:25px;color:#fff;-webkit-text-stroke:0.45px #fbb448;left:1237.3px;top:772.2px;transform:scaleX(0.899);transform-origin:0 0;">84.2%</div>
<div style="position:absolute;white-space:nowrap;line-height:1;font-size:14.5px;color:#fff;-webkit-text-stroke:0.25px #fbb448;left:1230.0px;top:810.2px;transform:scaleX(0.947);transform-origin:0 0;">Productivity</div>
<div style="position:absolute;white-space:nowrap;line-height:1;font-size:13px;color:rgba(255,255,255,0.85);;left:1088.0px;top:838.6px;transform:scaleX(0.857);transform-origin:0 0;">VIEW MORE</div>
<div style="position:absolute;white-space:nowrap;line-height:1;font-size:14.5px;color:#3b7f3b;text-decoration:underline;left:1446.4px;top:597.2px;transform:scaleX(0.946);transform-origin:0 0;">By Gianluca Philips</div>
<div style="position:absolute;white-space:nowrap;line-height:1;font-size:13.5px;color:#555;font-style:italic;left:1569.5px;top:598.0px;transform:scaleX(0.911);transform-origin:0 0;">12 days ago</div>
<div style="position:absolute;white-space:nowrap;line-height:1;font-size:15px;color:#5a88a8;-webkit-text-stroke:0.25px #f9f9fa;left:1767.0px;top:596.8px;transform:scaleX(0.908);transform-origin:0 0;">VIEW MORE</div>
<div style="position:absolute;white-space:nowrap;line-height:1;font-size:14.5px;color:#555;;left:1446.4px;top:619.7px;transform:scaleX(0.968);transform-origin:0 0;">Moved to phase 2</div>
<div style="position:absolute;white-space:nowrap;line-height:1;font-size:14.5px;color:#3b7f3b;text-decoration:underline;left:1371.0px;top:676.7px;transform:scaleX(0.946);transform-origin:0 0;">By Gianluca Philips</div>
<div style="position:absolute;white-space:nowrap;line-height:1;font-size:13.5px;color:#555;font-style:italic;left:1493.5px;top:677.5px;transform:scaleX(0.922);transform-origin:0 0;">12 days ago</div>
<div style="position:absolute;white-space:nowrap;line-height:1;font-size:15px;color:#5a88a8;-webkit-text-stroke:0.25px #f9f9fa;left:1691.5px;top:676.2px;transform:scaleX(0.908);transform-origin:0 0;">VIEW MORE</div>
<div style="position:absolute;white-space:nowrap;line-height:1;font-size:14.5px;color:#555;;left:1371.0px;top:699.2px;transform:scaleX(0.974);transform-origin:0 0;">Client signed off 50% completion</div>
<div style="position:absolute;white-space:nowrap;line-height:1;font-size:14.5px;color:#3b7f3b;text-decoration:underline;left:1446.4px;top:754.7px;transform:scaleX(0.925);transform-origin:0 0;">By James Sponder</div>
<div style="position:absolute;white-space:nowrap;line-height:1;font-size:13.5px;color:#555;font-style:italic;left:1564.5px;top:755.5px;transform:scaleX(0.947);transform-origin:0 0;">3 months ago</div>
<div style="position:absolute;white-space:nowrap;line-height:1;font-size:15px;color:#5a88a8;-webkit-text-stroke:0.25px #f9f9fa;left:1767.0px;top:754.2px;transform:scaleX(0.908);transform-origin:0 0;">VIEW MORE</div>
<div style="position:absolute;white-space:nowrap;line-height:1;font-size:14.5px;color:#555;;left:1446.4px;top:777.2px;">did this</div>
<div style="position:absolute;white-space:nowrap;line-height:1;font-size:14.5px;color:#3b7f3b;text-decoration:underline;left:1371.0px;top:833.9px;transform:scaleX(0.922);transform-origin:0 0;">By James Sponder</div>
<div style="position:absolute;white-space:nowrap;line-height:1;font-size:13.5px;color:#555;font-style:italic;left:1489.0px;top:834.7px;transform:scaleX(0.957);transform-origin:0 0;">4 months ago</div>
<div style="position:absolute;white-space:nowrap;line-height:1;font-size:15px;color:#5a88a8;-webkit-text-stroke:0.25px #f9f9fa;left:1691.8px;top:833.5px;transform:scaleX(0.908);transform-origin:0 0;">VIEW MORE</div>
<div style="position:absolute;white-space:nowrap;line-height:1;font-size:14.5px;color:#555;;left:1371.0px;top:856.4px;transform:scaleX(0.980);transform-origin:0 0;">added T&amp;M rates to project for extra work (€800 per day)</div>
</body></html>
